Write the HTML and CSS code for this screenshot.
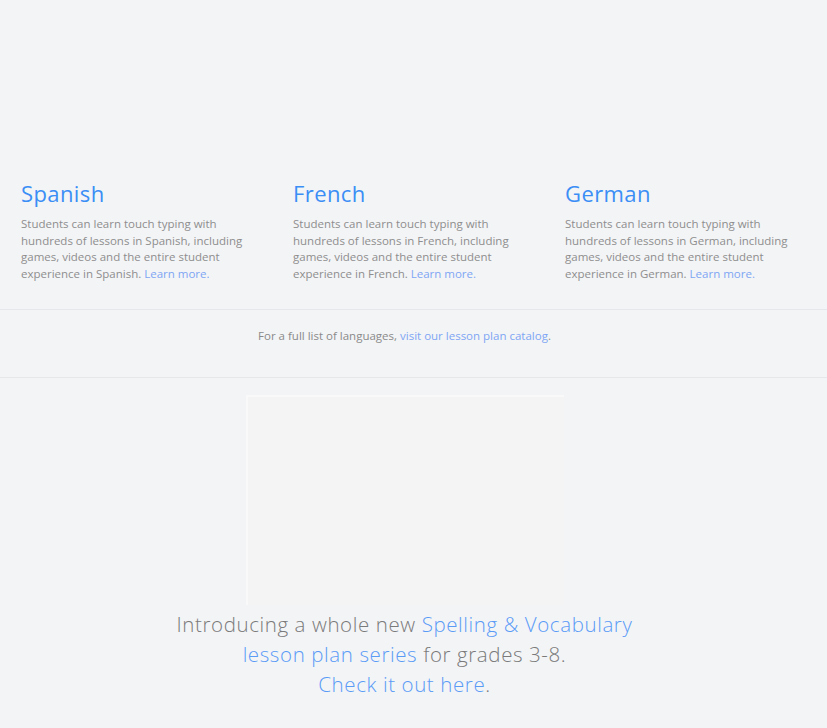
FILE: index.html
```html
<!DOCTYPE html>
<html lang="en">
<head>
<meta charset="utf-8">
<title>Languages</title>
<link rel="stylesheet" href="styles.css">
</head>
<body>
<div class="page">
  <section class="langs">
    <div class="lang">
      <h2 class="lang-title">Spanish</h2>
      <p class="lang-text">Students can learn touch typing with hundreds of lessons in Spanish, including games, videos and the entire student experience in Spanish. <a class="link" href="#">Learn more.</a></p>
    </div>
    <div class="lang">
      <h2 class="lang-title">French</h2>
      <p class="lang-text">Students can learn touch typing with hundreds of lessons in French, including games, videos and the entire student experience in French. <a class="link" href="#">Learn more.</a></p>
    </div>
    <div class="lang">
      <h2 class="lang-title">German</h2>
      <p class="lang-text">Students can learn touch typing with hundreds of lessons in German, including games, videos and the entire student experience in German. <a class="link" href="#">Learn more.</a></p>
    </div>
  </section>
  <section class="catalog">
    <p class="catalog-text">For a full list of languages, <a class="link" href="#">visit our lesson plan catalog</a>.</p>
  </section>
  <section class="promo">
    <div class="promo-image"></div>
    <p class="promo-text">Introducing a whole new <a class="promo-link" href="#">Spelling &amp; Vocabulary lesson plan series</a> for grades 3-8.<br><a class="promo-link" href="#">Check it out here</a>.</p>
  </section>
</div>
</body>
</html>
```
FILE: styles.css
```css
html, body {
  margin: 0;
  padding: 0;
  background: #f3f4f6;
}
body {
  font-family: "Open Sans", "Liberation Sans", sans-serif;
  color: #8c8c8c;
  height: 728px;
  overflow: hidden;
}
.page {
  padding-top: 178px;
}
.langs {
  display: grid;
  grid-template-columns: 272px 272px 272px;
  padding-left: 21px;
  padding-bottom: 27px;
  border-bottom: 1px solid #e6e7ea;
}
.lang {
  padding-right: 30px;
}
.lang-title {
  margin: 0;
  font-size: 22px;
  line-height: 30px;
  font-weight: 400;
  color: #3b8ef5;
  letter-spacing: 0.4px;
}
.lang-text {
  margin: 8px 0 0;
  font-size: 11.5px;
  line-height: 16.6px;
  font-weight: 400;
  color: #8e8e8e;
}
.link {
  color: #7ea6f4;
  text-decoration: none;
}
.catalog {
  border-bottom: 1px solid #e6e7ea;
  padding: 17px 18px 33px 0;
}
.catalog-text {
  margin: 0;
  text-align: center;
  font-size: 11.5px;
  line-height: 17px;
  color: #8a8a8a;
}
.promo {
  display: flex;
  flex-direction: column;
  align-items: center;
  padding-right: 18px;
  padding-top: 17px;
}
.promo-image {
  width: 316px;
  height: 208px;
  background: #f4f4f4;
  border-top: 2px solid #f9f9f9;
  border-left: 2px solid #f9f9f9;
}
.promo-text {
  margin: 4px 0 0;
  width: 500px;
  text-align: center;
  font-size: 20.5px;
  line-height: 30px;
  font-weight: 300;
  letter-spacing: 0.6px;
  color: #7a7a7a;
}
.promo-link {
  color: #5a9bf6;
  text-decoration: none;
}
```
